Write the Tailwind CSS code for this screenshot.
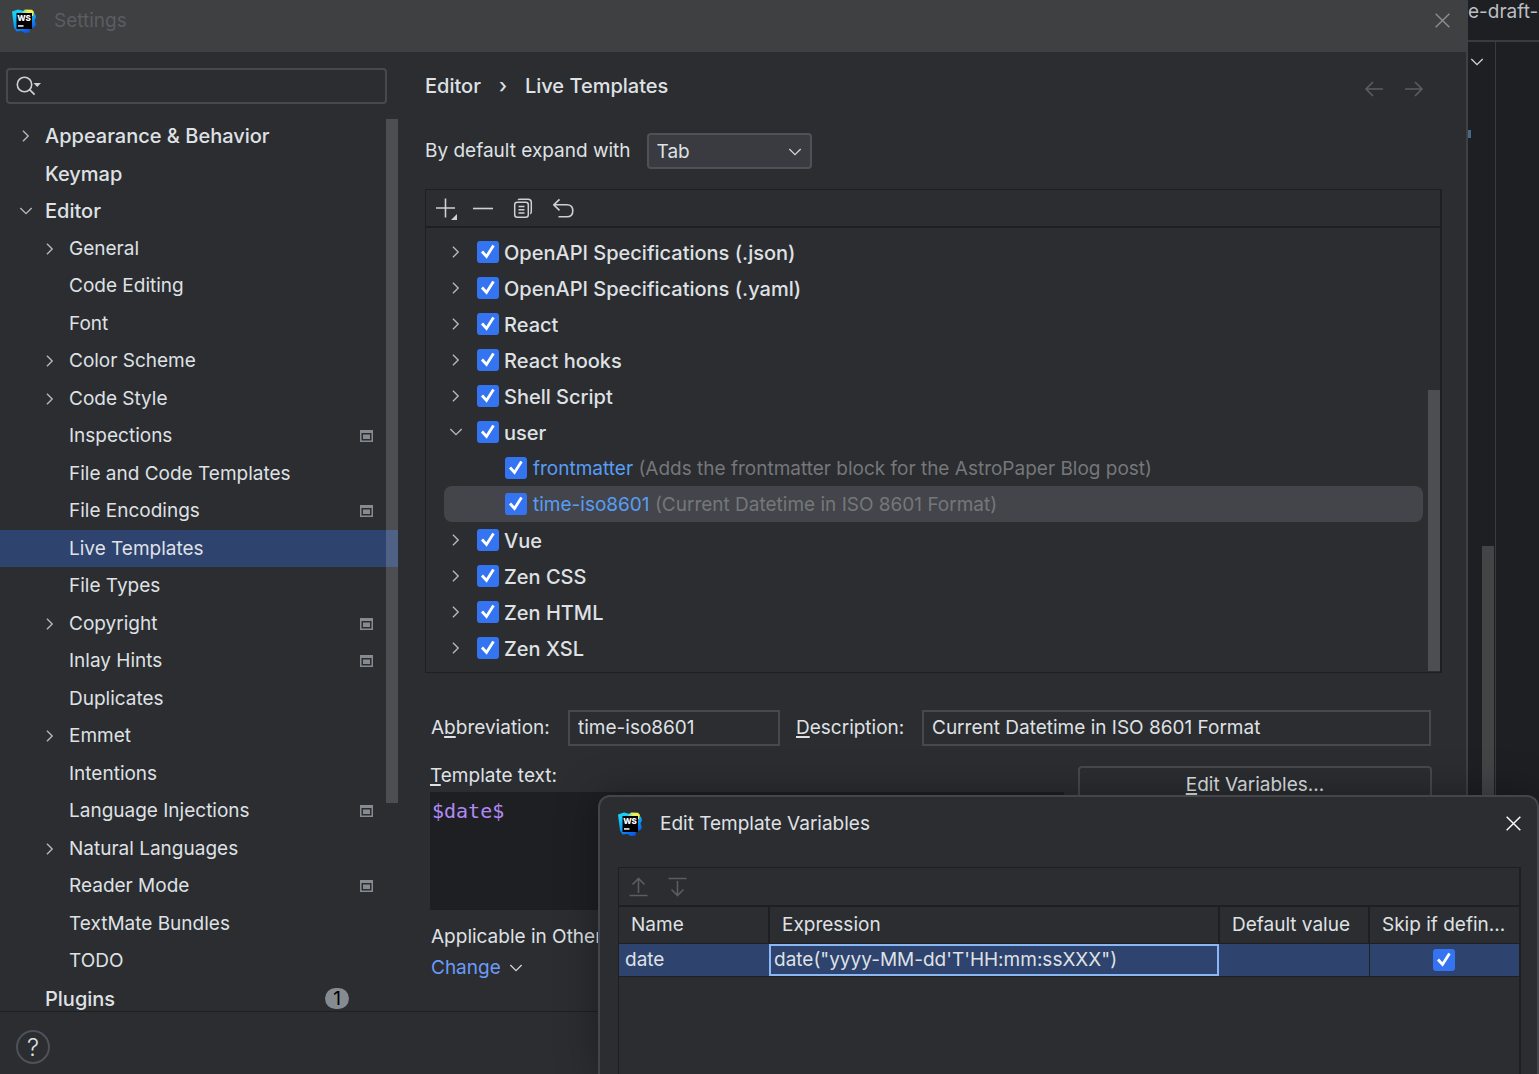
<!DOCTYPE html>
<html lang="en">
<head>
  <meta charset="UTF-8" />
  <meta name="viewport" content="width=device-width, initial-scale=1.0"/>
  <title>Settings</title>
  <script src="https://cdn.jsdelivr.net/npm/@tailwindcss/browser@4"></script>
</head>
<body class="relative flex h-screen overflow-hidden bg-[#1e1f22] text-[#dfe1e5] font-['Inter','Liberation_Sans',sans-serif] text-[19px] leading-[26px]">

<!-- shared icons -->
<svg class="absolute size-0">
  <defs>
    <linearGradient id="logo-blue" x1="0" y1="0" x2=".5" y2="1"><stop offset=".2" stop-color="#18d0f5"/><stop offset=".6" stop-color="#0fa0f5"/><stop offset="1" stop-color="#0a5be8"/></linearGradient>
    <linearGradient id="logo-yellow" x1="0" y1="0" x2="1" y2="0"><stop offset="0" stop-color="#52d8c8"/><stop offset=".45" stop-color="#e9f05a"/><stop offset="1" stop-color="#f7f04e"/></linearGradient>
  </defs>
  <symbol id="i-right" viewBox="0 0 16 16"><path d="M4.500 2l6 6-6 6" fill="none" stroke="currentColor" stroke-width="1.6"/></symbol>
  <symbol id="i-down" viewBox="0 0 16 16"><path d="M1.500 4.500L8 11l6.500-6.500" fill="none" stroke="currentColor" stroke-width="1.6"/></symbol>
  <symbol id="i-close" viewBox="0 0 16 16"><path d="M.7.7l14.6 14.6M15.3.7L.7 15.3" fill="none" stroke="currentColor" stroke-width="1.5"/></symbol>
  <symbol id="i-project" viewBox="0 0 13 12"><path d="M0 0h13v12H0z" fill="#868a91"/><path d="M1.5 3h10v7.500h-10z" fill="#2b2d30"/><path d="M3 4.500h7v4.500H3z" fill="#868a91"/></symbol>
  <symbol id="i-check" viewBox="0 0 22 22"><path d="M5 10.500l4.500 5 7-11" fill="none" stroke="#fff" stroke-width="2.800"/></symbol>
  <symbol id="i-logo" viewBox="0 0 24 24">
    <path d="M0 2.500L6 .5l6 1.500 8 3 3-.5 1 4-1.500 3 1.500 4-2 3-4 .5-.5 4.500-5 .5-3-2-5 .5-2.500-4z" fill="url(#logo-blue)"/>
    <path d="M10 3L13 .5l7 .3 2 2.200-1 4-10-1z" fill="url(#logo-yellow)"/>
    <path d="M4.500 4h15.500v16H4.500z" fill="#000"/>
    <text x="5.200" y="11.800" font-family="Inter, sans-serif" font-size="8" font-weight="800" fill="#fff">WS</text>
    <path d="M6 16.200h5.500v1.500H6z" fill="#fff"/>
  </symbol>
</svg>

<main class="flex min-w-0 flex-1 flex-col border-r-2 border-[#3e4042] bg-[#2b2d30]">
  <header class="flex h-[52px] shrink-0 items-start justify-between bg-[#3e4042] pl-3 pr-3 pt-2">
    <div class="flex items-center gap-[18px]">
      <svg class="size-6"><use href="#i-logo"/></svg>
      <h1 class="text-[#5a5d61]">Settings</h1>
    </div>
    <button aria-label="Close settings" class="grid size-6 place-items-center text-[#8c8e90]"><svg class="size-[15px]"><use href="#i-close"/></svg></button>
  </header>

  <div class="flex min-h-0 flex-1">
    <nav class="relative flex w-[398px] shrink-0 flex-col pt-4">
      <label class="ml-1.5 mr-[11px] flex h-9 items-center rounded border-2 border-[#46494d] px-2">
        <svg class="h-5 w-[26px] shrink-0" viewBox="0 0 26 20" fill="none" stroke="#ced0d6" stroke-width="1.600"><circle cx="8.500" cy="8.500" r="7.200"/><path d="M13.600 13.600l5 5"/><path d="M17.500 7h7.500l-3.750 4z" fill="#ced0d6" stroke="none"/></svg>
        <input type="text" aria-label="Search settings" class="min-w-0 flex-1 bg-transparent outline-none">
      </label>
      <ul id="settings-tree" class="mt-[13px] min-h-0 flex-1 overflow-hidden"></ul>
      <div class="absolute right-0 top-[67px] h-[684px] w-3 bg-white/16"></div>
    </nav>

    <section class="flex min-w-0 flex-1 flex-col pl-[27px] pr-6">
      <div class="flex h-[68px] items-center justify-between pr-[18px]">
        <h2 class="flex gap-[18px] text-xl font-medium"><span>Editor</span><span>›</span><span>Live Templates</span></h2>
        <div class="flex gap-5 pt-1.5 text-[#5a5d61]">
          <button aria-label="Back"><svg class="h-4 w-5" viewBox="0 0 20 16" fill="none" stroke="currentColor" stroke-width="1.600"><path d="M19 8H2M9 1L2 8l7 7"/></svg></button>
          <button aria-label="Forward"><svg class="h-4 w-5" viewBox="0 0 20 16" fill="none" stroke="currentColor" stroke-width="1.600"><path d="M1 8h17M11 1l7 7-7 7"/></svg></button>
        </div>
      </div>

      <div class="mt-[13px] flex items-center gap-4">
        <label for="expand">By default expand with</label>
        <div class="relative">
          <select id="expand" class="h-9 w-[165px] appearance-none rounded border-2 border-[#4e5157] bg-[#393b40] px-2 pt-0.5"><option>Tab</option></select>
          <svg class="pointer-events-none absolute right-2.5 top-3 size-3.5 text-[#ced0d6]"><use href="#i-down"/></svg>
        </div>
      </div>

      <div class="mt-5 border border-r-2 border-[#1e1f22]">
        <div class="flex h-[38px] items-center gap-5 border-b-2 border-[#1e1f22] pl-[9px] text-[#ced0d6]">
          <button aria-label="Add"><svg class="h-6 w-[22px]" viewBox="0 0 22 24" fill="none" stroke="currentColor" stroke-width="1.600"><path d="M10.500 2.500v19M1 12h19"/><path d="M22 18v6h-6z" fill="currentColor" stroke="none"/></svg></button>
          <button aria-label="Remove" class="-ml-1"><svg class="h-5 w-5" viewBox="0 0 20 20" stroke="currentColor" stroke-width="1.600"><path d="M0 10.500h20"/></svg></button>
          <button aria-label="Duplicate"><svg class="size-5" viewBox="0 0 20 20" fill="none" stroke="currentColor" stroke-width="1.500"><rect x="1.700" y="4.200" width="13.600" height="15" rx="2.500"/><path d="M5 1.800Q5.500 1.300 7 1.300h8q3.300 0 3.300 3.300v9q0 1.700-1 2.200M5.500 8.500h6M5.500 11.700h6M5.500 14.900h6"/></svg></button>
          <button aria-label="Restore defaults"><svg class="h-5 w-[22px]" viewBox="0 0 22 20" fill="none" stroke="currentColor" stroke-width="1.600"><path d="M6.500 1.300L.8 6.800l5.700 5.500M.8 6.800h13q6 0 6 6t-6 6H5.500"/></svg></button>
        </div>
        <div class="relative py-1.5">
          <ul id="template-tree" class="pl-[18px] pr-[17px]"></ul>
          <div class="absolute bottom-px right-0 h-[281px] w-3 bg-white/16"></div>
        </div>
      </div>

      <div class="mt-[37px] flex items-center pl-1.5 pr-[11px]">
        <label for="abbr" class="w-[137px]">A<span class="underline decoration-2 underline-offset-2">b</span>breviation:</label>
        <input id="abbr" type="text" value="time-iso8601" class="h-9 w-[212px] border-2 border-[#46494d] px-2 pb-0.5">
        <label for="desc" class="ml-4 w-[126px]"><span class="underline decoration-2 underline-offset-2">D</span>escription:</label>
        <input id="desc" type="text" value="Current Datetime in ISO 8601 Format" class="h-9 min-w-0 flex-1 border-2 border-[#46494d] px-2 pb-0.5">
      </div>

      <div class="mt-5 flex justify-between gap-3.5 pl-[5px] pr-2.5">
        <div class="min-w-0 flex-1">
          <label for="tpl" class="block leading-5"><span class="underline decoration-2 underline-offset-2">T</span>emplate text:</label>
          <textarea id="tpl" spellcheck="false" class="mt-1.5 block h-[118px] w-full resize-none bg-[#1e1f22] px-0.5 pt-1.5 font-['DejaVu_Sans_Mono',monospace] text-xl leading-[26px] text-[#b189f5] outline-none">$date$</textarea>
        </div>
        <button class="h-[38px] w-[354px] rounded border-2 border-[#46494d]"><span class="underline decoration-2 underline-offset-2">E</span>dit Variables...</button>
      </div>
      <p class="mt-3.5 pl-1.5">Applicable in Other</p>
      <button class="mt-[5px] flex items-center gap-2 self-start pl-1.5 text-[#6b9bfa]">Change <svg class="size-3.5 text-[#ced0d6]"><use href="#i-down"/></svg></button>
    </section>
  </div>

  <footer class="flex h-[63px] shrink-0 items-center border-t border-[#1e1f22] px-4 pt-2">
    <button aria-label="Help" class="grid size-[34px] place-items-center rounded-full border-2 border-[#4e5157] text-2xl font-light">?</button>
  </footer>
</main>

<aside class="flex w-[71px] shrink-0 flex-col overflow-hidden">
  <p class="h-[42px] shrink-0 whitespace-nowrap border-b-2 border-[#393b40] leading-6 text-[#bcbec4]">e-draft-</p>
  <div class="relative w-7 flex-1 border-r border-[#393b40]">
    <svg class="ml-0.5 mt-[13px] size-3.5 text-[#ced0d6]"><use href="#i-down"/></svg>
    <div class="mt-[61px] h-2 w-[3px] bg-[#456b8c]"></div>
    <div class="absolute bottom-0 right-px top-[504px] w-3 bg-[#434446]"></div>
  </div>
</aside>

<div role="dialog" aria-labelledby="dlg-title" class="absolute bottom-0 left-[598px] right-0 top-[795px] flex flex-col rounded-t-xl border-2 border-b-0 border-[#43454a] bg-[#2b2d30] pl-[18px] pr-4 shadow-[0_0_40px_rgba(0,0,0,0.35)]">
  <header class="flex h-[70px] shrink-0 items-start justify-between pt-3.5">
    <div class="flex items-center gap-[18px]">
      <svg class="size-6"><use href="#i-logo"/></svg>
      <h2 id="dlg-title">Edit Template Variables</h2>
    </div>
    <button aria-label="Close dialog" class="-mr-1 grid size-6 place-items-center text-white"><svg class="size-[15px]"><use href="#i-close"/></svg></button>
  </header>
  <div class="flex-1 border border-b-0 border-r-2 border-[#1e1f22]">
    <div class="flex h-[37px] items-center gap-5 pl-2.5 pt-px text-[#5a5d61]">
      <button aria-label="Move up"><svg class="h-5 w-[19px]" viewBox="0 0 19 20" fill="none" stroke="currentColor" stroke-width="1.600"><path d="M.5 18.500h18M9.500 16V1.500M3.500 7.500l6-6 6 6"/></svg></button>
      <button aria-label="Move down"><svg class="h-5 w-[19px]" viewBox="0 0 19 20" fill="none" stroke="currentColor" stroke-width="1.600"><path d="M.5 1.500h18M9.500 4v14.500M3.500 12.500l6 6 6-6"/></svg></button>
    </div>
    <table class="w-full table-fixed border-collapse text-left">
      <thead>
        <tr class="h-[37px] border-t-2 border-[#1e1f22]">
          <th class="w-[150px] border-r-2 border-[#1e1f22] px-3 font-normal">Name</th>
          <th class="border-r-2 border-[#1e1f22] px-3 font-normal">Expression</th>
          <th class="w-[150px] border-r-2 border-[#1e1f22] px-3 font-normal">Default value</th>
          <th class="w-[150px] truncate px-3 font-normal">Skip if defin...</th>
        </tr>
      </thead>
      <tbody>
        <tr class="h-[33px] border-y border-[#1e1f22] bg-[#2e436e]">
          <td class="px-1.5">date</td>
          <td class="p-0"><input type="text" aria-label="Expression" value="date(&quot;yyyy-MM-dd'T'HH:mm:ssXXX&quot;)" class="block h-8 w-full border-2 border-[#8ab8f5] px-[3px] outline-none"></td>
          <td class="border-r border-[#1e1f22]"></td>
          <td>
            <label class="mx-auto grid size-[22px] place-items-center">
              <input type="checkbox" checked aria-label="Skip if defined" class="col-start-1 row-start-1 size-[22px] appearance-none rounded-[3px] bg-[#3574f0]">
              <svg class="pointer-events-none col-start-1 row-start-1 size-[22px]"><use href="#i-check"/></svg>
            </label>
          </td>
        </tr>
      </tbody>
    </table>
  </div>
</div>

<script>
// kind: "open" / "closed" draws an arrow, project draws the per-project mark
const settings = [
  { text: "Appearance & Behavior", top: true, kind: "closed" },
  { text: "Keymap", top: true },
  { text: "Editor", top: true, kind: "open" },
  { text: "General", kind: "closed" },
  { text: "Code Editing" },
  { text: "Font" },
  { text: "Color Scheme", kind: "closed" },
  { text: "Code Style", kind: "closed" },
  { text: "Inspections", project: true },
  { text: "File and Code Templates" },
  { text: "File Encodings", project: true },
  { text: "Live Templates", selected: true },
  { text: "File Types" },
  { text: "Copyright", kind: "closed", project: true },
  { text: "Inlay Hints", project: true },
  { text: "Duplicates" },
  { text: "Emmet", kind: "closed" },
  { text: "Intentions" },
  { text: "Language Injections", project: true },
  { text: "Natural Languages", kind: "closed" },
  { text: "Reader Mode", project: true },
  { text: "TextMate Bundles" },
  { text: "TODO" },
  { text: "Plugins", top: true, badge: 1 },
];

const templates = [
  { text: "OpenAPI Specifications (.json)", kind: "closed" },
  { text: "OpenAPI Specifications (.yaml)", kind: "closed" },
  { text: "React", kind: "closed" },
  { text: "React hooks", kind: "closed" },
  { text: "Shell Script", kind: "closed" },
  { text: "user", kind: "open" },
  { text: "frontmatter", note: "(Adds the frontmatter block for the AstroPaper Blog post)" },
  { text: "time-iso8601", note: "(Current Datetime in ISO 8601 Format)", selected: true },
  { text: "Vue", kind: "closed" },
  { text: "Zen CSS", kind: "closed" },
  { text: "Zen HTML", kind: "closed" },
  { text: "Zen XSL", kind: "closed" },
];

function arrow(kind) {
  if (!kind) return '<span class="w-3.5 shrink-0"></span>';
  return `<svg class="size-3.5 shrink-0 text-[#b4b8bf]"><use href="#${kind === "open" ? "i-down" : "i-right"}"/></svg>`;
}

document.getElementById("settings-tree").innerHTML = settings.map(s => `
  <li class="flex items-center odd:h-[38px] even:h-[37px] ${s.top ? "pl-[19px] text-xl leading-[26px] font-medium" : "pl-[43px]"} ${s.selected ? "bg-[#2e436e]" : ""}">
    ${arrow(s.kind)}
    <a href="#" class="ml-3 flex-1">${s.text.replace("&", "&amp;")}</a>
    ${s.project ? '<svg class="mr-[25px] h-3 w-[13px]"><use href="#i-project"/></svg>' : ""}
    ${s.badge ? `<span class="mr-[49px] h-[21px] w-6 rounded-full bg-[#868a91] text-center text-[19px] font-normal leading-[21px] text-black">${s.badge}</span>` : ""}
  </li>`).join("");

document.getElementById("template-tree").innerHTML = templates.map((t, i) => `
  <li class="flex h-9 items-center rounded-lg ${t.note ? "pl-[33px]" : "pl-[5px]"} ${t.selected ? "bg-[#43454a]" : ""}">
    ${arrow(t.kind)}
    <span class="ml-3.5 grid size-[22px] shrink-0 place-items-center">
      <input id="t${i}" type="checkbox" checked class="col-start-1 row-start-1 size-[22px] appearance-none rounded-[3px] bg-[#3574f0]">
      <svg class="pointer-events-none col-start-1 row-start-1 size-[22px]"><use href="#i-check"/></svg>
    </span>
    <label for="t${i}" class="whitespace-nowrap pt-px ${t.note ? "ml-1.5 text-[#589df6]" : "ml-[5px] text-xl leading-[26px] font-medium"}">${t.text}${t.note ? ` <span class="text-[#75777b]">${t.note}</span>` : ""}</label>
  </li>`).join("");
</script>
</body>
</html>
